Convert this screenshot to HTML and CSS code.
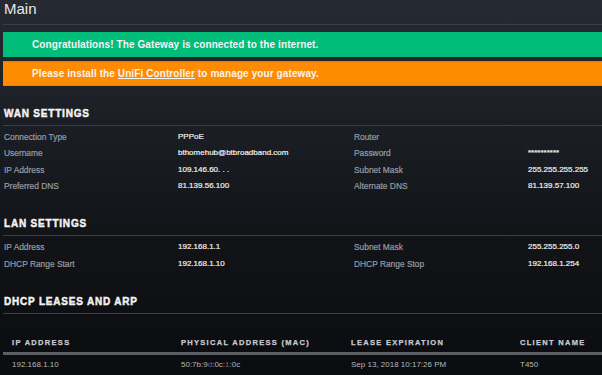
FILE: index.html
```html
<!DOCTYPE html>
<html>
<head>
<meta charset="utf-8">
<link rel="stylesheet" href="styles.css">
</head>
<body>
<div class="page">
  <h1 class="title">Main</h1>
  <div class="alerts">
    <div class="alert alert-ok">Congratulations! The Gateway is connected to the internet.</div>
    <div class="alert alert-warn">Please install the <a href="#" class="link">UniFi Controller</a> to manage your gateway.</div>
  </div>

  <section class="section">
    <h2 class="section-title">WAN SETTINGS</h2>
    <div class="kv">
      <div class="label">Connection Type</div><div class="value">PPPoE</div>
      <div class="label">Router</div><div class="value"></div>
      <div class="label">Username</div><div class="value">bthomehub@btbroadband.com</div>
      <div class="label">Password</div><div class="value">**********</div>
      <div class="label">IP Address</div><div class="value">109.146.60. . .</div>
      <div class="label">Subnet Mask</div><div class="value">255.255.255.255</div>
      <div class="label">Preferred DNS</div><div class="value">81.139.56.100</div>
      <div class="label">Alternate DNS</div><div class="value">81.139.57.100</div>
    </div>
  </section>

  <section class="section">
    <h2 class="section-title">LAN SETTINGS</h2>
    <div class="kv">
      <div class="label">IP Address</div><div class="value">192.168.1.1</div>
      <div class="label">Subnet Mask</div><div class="value">255.255.255.0</div>
      <div class="label">DHCP Range Start</div><div class="value">192.168.1.10</div>
      <div class="label">DHCP Range Stop</div><div class="value">192.168.1.254</div>
    </div>
  </section>

  <section class="section">
    <h2 class="section-title">DHCP LEASES AND ARP</h2>
    <div class="table">
      <div class="thead">
        <div class="th">IP ADDRESS</div>
        <div class="th">PHYSICAL ADDRESS (MAC)</div>
        <div class="th">LEASE EXPIRATION</div>
        <div class="th">CLIENT NAME</div>
      </div>
      <div class="trow">
        <div class="td">192.168.1.10</div>
        <div class="td">50:7b:9<span class="blur">d</span>:0c:<span class="blur">1</span>:0c</div>
        <div class="td">Sep 13, 2018 10:17:26 PM</div>
        <div class="td">T450</div>
      </div>
    </div>
  </section>
</div>
</body>
</html>
```
FILE: styles.css
```css
html, body {
  margin: 0;
  padding: 0;
}
body {
  width: 602px;
  height: 375px;
  overflow: hidden;
  font-family: "Liberation Sans", Arial, sans-serif;
  background: linear-gradient(to bottom, #262b33 0px, #1c2026 110px, #121418 230px, #0b0c0f 375px);
  color: #e6e6e6;
}
.page {
  padding-left: 3px;
}
.title {
  margin: 0;
  padding: 0 0 7px 1px;
  font-size: 15px;
  line-height: 17px;
  font-weight: normal;
  color: #e8e8e8;
  border-bottom: 1px solid #3a3e46;
}
.alerts {
  margin-top: 7px;
  display: flex;
  flex-direction: column;
  gap: 4px;
}
.alert {
  height: 25px;
  line-height: 25px;
  padding-left: 29px;
  font-size: 10px;
  font-weight: bold;
  letter-spacing: 0.1px;
  color: #f4f4f4;
}
.alert-ok {
  background: #00bd79;
}
.alert-warn {
  background: #ff8c00;
  box-shadow: inset 0 1px 0 #e07e06, inset 0 -1px 0 #e88304;
}
.link {
  color: #f4f4f4;
  text-decoration: underline;
}
.section {
  margin-top: 20px;
}
.section + .section {
  margin-top: 22px;
}
.section-title {
  margin: 0;
  padding: 0 0 4px 1px;
  font-size: 10px;
  line-height: 15px;
  font-weight: bold;
  letter-spacing: 0.8px;
  color: #f2f2f2;
  -webkit-text-stroke: 0.45px #f2f2f2;
  border-bottom: 1px solid #3a3e46;
}
.kv {
  display: grid;
  grid-template-columns: 174px 176px 174px 1fr;
  grid-auto-rows: 16.33px;
  padding: 3px 0 0 1px;
  font-size: 8px;
  line-height: 16.33px;
}
.label {
  font-size: 8.4px;
  color: #979ca4;
  -webkit-text-stroke: 0.2px #979ca4;
}
.value {
  color: #f0f0f0;
  -webkit-text-stroke: 0.2px #f0f0f0;
}
.table {
  margin-top: 23px;
}
.thead {
  display: grid;
  grid-template-columns: 169px 170px 169px 1fr;
  padding: 0 0 3px 9px;
  border-bottom: 3px solid #5b5f65;
  font-size: 7.5px;
  line-height: 12px;
  font-weight: bold;
  letter-spacing: 1.3px;
  color: #c8ccd0;
}
.th {
  -webkit-text-stroke: 0.25px #c8ccd0;
}
.trow {
  display: grid;
  grid-template-columns: 169px 170px 169px 1fr;
  padding: 2px 0 0 9px;
  font-size: 8px;
  line-height: 16px;
  color: #b4b8bd;
}
.blur {
  color: #6a6e73;
}
```
